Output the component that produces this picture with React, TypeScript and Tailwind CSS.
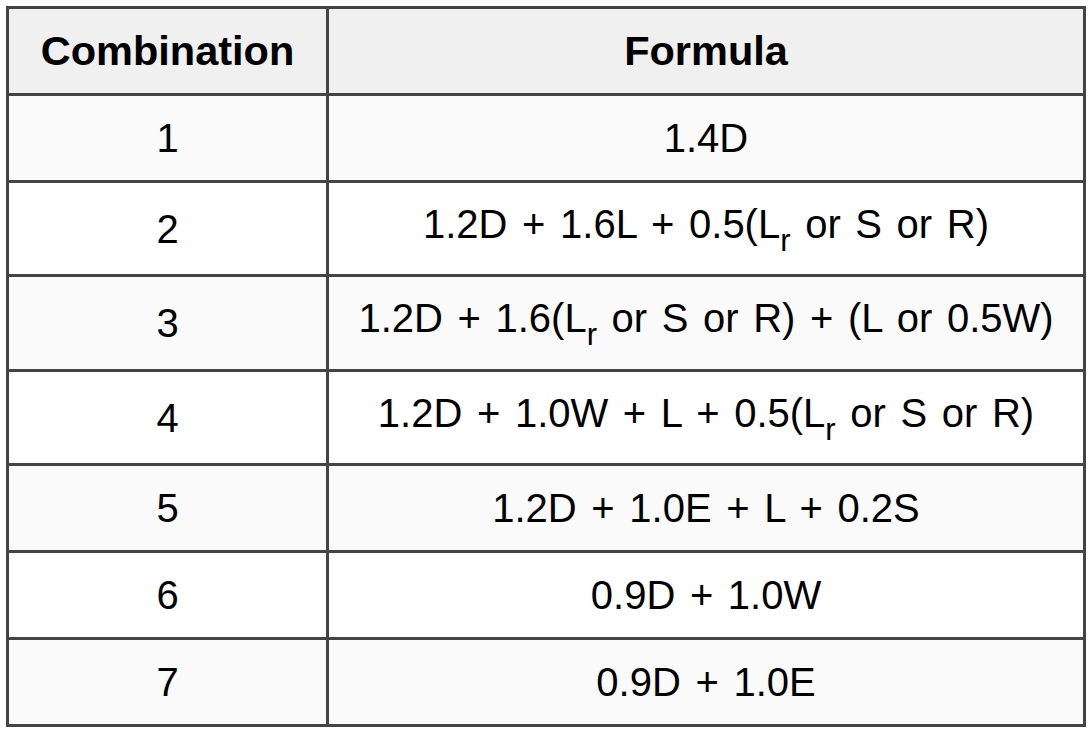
const Sub = () => (
  <sub className="text-[31px] relative top-[13px] align-baseline leading-none">r</sub>
);

const rows: { n: string; f: React.ReactNode; h: string; sub?: boolean }[] = [
  { n: '1', f: '1.4D', h: 'h-[87px]' },
  {
    n: '2',
    f: (
      <>
        1.2D + 1.6L + 0.5(L<Sub /> or S or R)
      </>
    ),
    h: 'h-[94px]',
    sub: true,
  },
  {
    n: '3',
    f: (
      <>
        1.2D + 1.6(L<Sub /> or S or R) + (L or 0.5W)
      </>
    ),
    h: 'h-[95px]',
    sub: true,
  },
  {
    n: '4',
    f: (
      <>
        1.2D + 1.0W + L + 0.5(L<Sub /> or S or R)
      </>
    ),
    h: 'h-[94px]',
    sub: true,
  },
  { n: '5', f: '1.2D + 1.0E + L + 0.2S', h: 'h-[87px]' },
  { n: '6', f: '0.9D + 1.0W', h: 'h-[87px]' },
  { n: '7', f: '0.9D + 1.0E', h: 'h-[87px]' },
];

export default function App() {
  return (
    <div className="w-[1092px] h-[732px] bg-white p-[6px] font-['Liberation_Sans',Arial,sans-serif] text-black">
      <div className="w-[1080px] border-[3px] border-[#444444]">
        <div className="flex h-[84px] bg-[#f0f0f0] text-[41.5px] font-bold">
          <div className="w-[320px] border-r-[3px] border-[#444444] flex items-center justify-center">
            Combination
          </div>
          <div className="flex-1 flex items-center justify-center">Formula</div>
        </div>
        {rows.map((r, i) => (
          <div
            key={r.n}
            className={`flex ${r.h} border-t-[3px] border-[#444444] text-[40px] ${
              i % 2 === 0 ? 'bg-[#fafafa]' : 'bg-white'
            }`}
          >
            <div className="w-[320px] border-r-[3px] border-[#444444] flex items-center justify-center">
              {r.n}
            </div>
            <div
              className={`flex-1 flex items-center justify-center whitespace-nowrap [word-spacing:3.5px] ${
                r.sub ? 'pb-[10px]' : ''
              }`}
            >
              <span>{r.f}</span>
            </div>
          </div>
        ))}
      </div>
    </div>
  );
}
